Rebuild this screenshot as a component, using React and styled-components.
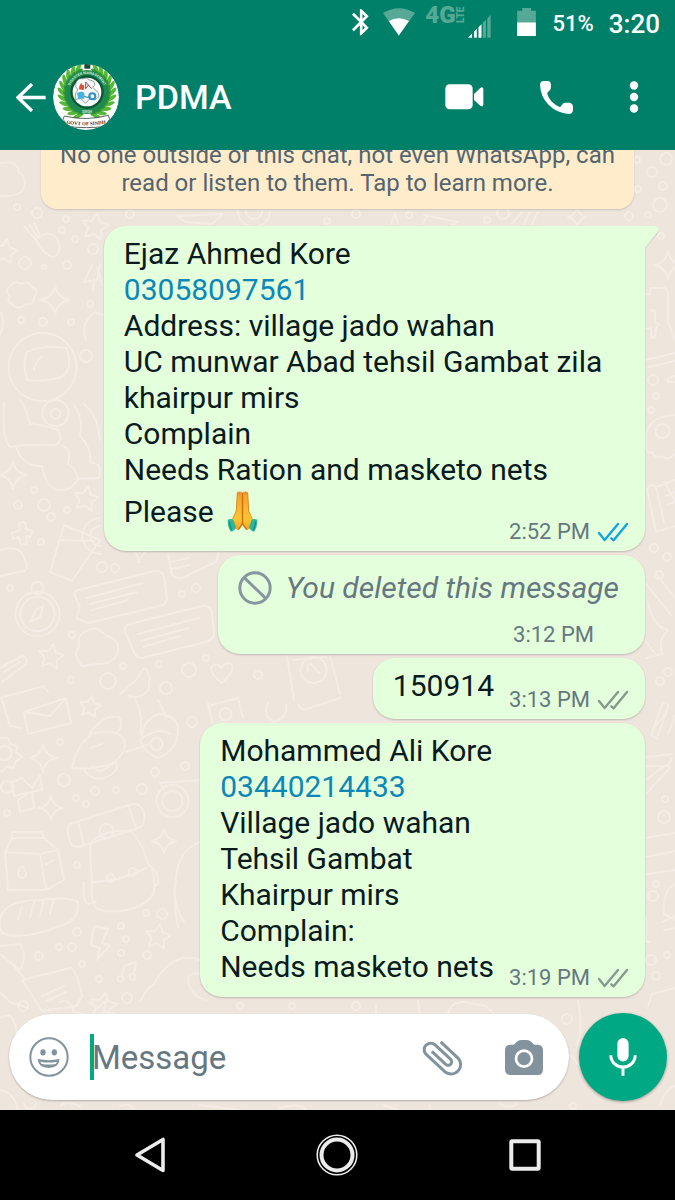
import React from "react";
import styled, { createGlobalStyle, css } from "styled-components";

const MESSAGES = [
  {
    id: "ration",
    tail: true,
    lines: [
      "Ejaz Ahmed Kore",
      { phone: "03058097561" },
      "Address: village jado wahan",
      "UC munwar Abad tehsil Gambat zila khairpur mirs",
      "Complain",
      "Needs Ration and masketo nets",
    ],
    last: "Please",
    emoji: true,
    time: "2:52 PM",
    status: "read",
  },
  { id: "deleted", deleted: true, time: "3:12 PM" },
  { id: "code", lines: [], last: "150914", time: "3:13 PM", status: "delivered" },
  {
    id: "nets",
    lines: [
      "Mohammed Ali Kore",
      { phone: "03440214433" },
      "Village jado wahan",
      "Tehsil Gambat",
      "Khairpur mirs",
      "Complain:",
    ],
    last: "Needs masketo nets",
    time: "3:19 PM",
    status: "delivered",
  },
];

const App = () => {
  const [draft, setDraft] = React.useState("");

  return (
    <Screen>
      <GlobalStyle />
      <Header>
        <StatusBar />
        <AppBar>
          <IconButton aria-label="Back">
            <BackIcon />
          </IconButton>
          <Emblem />
          <Title>PDMA</Title>
          <Actions>
            <IconButton aria-label="Video call">
              <VideoIcon />
            </IconButton>
            <IconButton aria-label="Voice call">
              <PhoneIcon />
            </IconButton>
            <IconButton aria-label="More options">
              <MoreIcon />
            </IconButton>
          </Actions>
        </AppBar>
      </Header>

      <Chat>
        <Wallpaper />
        <Messages>
          <Notice>
            No one outside of this chat, not even WhatsApp, can read or listen
            to them. Tap to learn more.
          </Notice>
          {MESSAGES.map((message) => (
            <Message key={message.id} {...message} />
          ))}
        </Messages>

        <Composer onSubmit={(ev) => ev.preventDefault()}>
          <Field>
            <IconButton type="button" aria-label="Emoji">
              <SmileIcon />
            </IconButton>
            <InputArea>
              {draft === "" && <Caret />}
              <Input
                aria-label="Message"
                placeholder="Message"
                value={draft}
                onChange={(ev) => setDraft(ev.target.value)}
              />
            </InputArea>
            <FieldActions>
              <IconButton type="button" aria-label="Attach">
                <ClipIcon />
              </IconButton>
              <IconButton type="button" aria-label="Camera">
                <CameraIcon />
              </IconButton>
            </FieldActions>
          </Field>
          <MicButton type="button" aria-label="Record voice message">
            <MicIcon />
          </MicButton>
        </Composer>
      </Chat>

      <NavBar>
        <IconButton aria-label="Back">
          <svg width="32" height="38" viewBox="0 0 32 38" fill="none">
            <path
              d="M29 3.5V34.5L3 19Z"
              stroke="#ececec"
              strokeWidth="3.6"
              strokeLinejoin="round"
            />
          </svg>
        </IconButton>
        <IconButton aria-label="Home">
          <svg width="42" height="42" viewBox="0 0 42 42" fill="none">
            <circle cx="21" cy="21" r="19.8" stroke="#ececec" strokeWidth="1.6" />
            <circle cx="21" cy="21" r="15.5" stroke="#ececec" strokeWidth="4" />
          </svg>
        </IconButton>
        <IconButton aria-label="Recent apps">
          <svg width="32" height="32" viewBox="0 0 32 32" fill="none">
            <rect
              x="2.3"
              y="2.3"
              width="27.4"
              height="27.4"
              rx="1"
              stroke="#ececec"
              strokeWidth="4"
            />
          </svg>
        </IconButton>
      </NavBar>
    </Screen>
  );
};

const StatusBar = () => (
  <Status>
    <svg width="21" height="28" viewBox="5 2 16 20" fill="#fff">
      <path d="M17.71 7.71L12 2h-1v7.59L6.41 5 5 6.41 10.59 12 5 17.59 6.41 19 11 14.41V22h1l5.71-5.71-4.3-4.29 4.3-4.29zM13 5.83l1.88 1.88L13 9.59V5.83zm1.88 10.46L13 18.17v-3.76l1.88 1.88z" />
    </svg>
    <svg width="32" height="28" viewBox="0 0 95 82">
      <path d="M0 14Q47 -14 95 14L47 81Z" fill="#56a996" />
      <path d="M17 38Q47 22 77 38L47 81Z" fill="#fff" />
    </svg>
    <Network>
      <Carrier>
        4G<small>LTE</small>
      </Carrier>
      <svg width="23" height="23" viewBox="0 0 68 68">
        <path d="M0 67L12 55V67ZM18 49L26 41V67H18ZM31 36L40 27V67H31Z" fill="#fff" />
        <path d="M44 23L53 14V67H44ZM57 10L67 0V67H57Z" fill="#56a996" />
      </svg>
    </Network>
    <BatteryBox>
      <svg width="19" height="28" viewBox="0 0 55 82">
        <path d="M0 8H15V0H41V8H55V42H0Z" fill="#56a996" />
        <path d="M0 42H55V82H0Z" fill="#fff" />
      </svg>
    </BatteryBox>
    <Percent>51%</Percent>
    <Clock>3:20</Clock>
  </Status>
);

const Message = ({ lines, last, emoji, tail, deleted, time, status }) => {
  if (deleted) {
    return (
      <Bubble $deleted>
        <DeletedRow>
          <BlockIcon />
          <em>You deleted this message</em>
        </DeletedRow>
        <LastRow $end>
          <Meta $noTicks>{time}</Meta>
        </LastRow>
      </Bubble>
    );
  }

  return (
    <Bubble $tail={tail}>
      {tail && (
        <Tail width="14" height="23" viewBox="0 0 14 23">
          <path d="M0 1V23L13 7Q14 0 9 1Z" fill="#000" opacity="0.1" />
          <path d="M0 0V22L12.4 6Q15 0.5 10 0Z" fill="#e4ffdb" />
        </Tail>
      )}
      {lines.map((line) =>
        line.phone ? (
          <div key={line.phone}>
            <PhoneLink href={`tel:${line.phone}`}>{line.phone}</PhoneLink>
          </div>
        ) : (
          <div key={line}>{line}</div>
        )
      )}
      <LastRow>
        <div>
          {last}
          {emoji && (
            <>
              {" "}
              <PrayIcon />
            </>
          )}
        </div>
        <Meta>
          {time}
          <Ticks read={status === "read"} />
        </Meta>
      </LastRow>
    </Bubble>
  );
};

/* Icons */

const BackIcon = () => (
  <svg width="30" height="29" viewBox="0 0 90 87" fill="none">
    <path d="M48 3L6 43.5L48 84M6 43.5H89" stroke="#fff" strokeWidth="10" />
  </svg>
);

const VideoIcon = () => (
  <svg width="39" height="26" viewBox="0 0 117 78" fill="#fff">
    <rect x="1" y="1" width="82" height="75" rx="13" />
    <path d="M87 30L106 12Q114 7 115 15V62Q114 70 106 65L87 48Z" />
  </svg>
);

const PhoneIcon = () => (
  <svg width="33" height="33" viewBox="0 0 97 97" fill="#fff">
    <path d="M10 0H22Q31 0 32 9V20Q32 25 28 28L21 35Q23 48 34 60Q45 71 59 77L67 67Q71 63 77 64H88Q96 66 97 74V86Q96 96 84 97Q50 95 25 70Q1 45 0 10Q1 1 10 0Z" />
  </svg>
);

const MoreIcon = () => (
  <svg width="10" height="32" viewBox="0 0 10 32" fill="#fff">
    <circle cx="5" cy="4.5" r="4.2" />
    <circle cx="5" cy="16" r="4.2" />
    <circle cx="5" cy="27.5" r="4.2" />
  </svg>
);

const BlockIcon = () => (
  <svg width="34" height="34" viewBox="0 0 102 102" fill="none">
    <circle cx="51" cy="51" r="45.5" stroke="#8696a0" strokeWidth="9" />
    <path d="M18 19L84 83" stroke="#8696a0" strokeWidth="9" />
  </svg>
);

const Ticks = ({ read }) => (
  <svg width="30" height="20" viewBox="0 0 90 60" fill="none">
    <path
      d="M3 33L20 54L60 6M40 49L47 55L87 6"
      stroke={read ? "#11a4e0" : "#86988f"}
      strokeWidth="7"
      strokeLinecap="round"
      strokeLinejoin="round"
    />
  </svg>
);

const SmileIcon = () => (
  <svg width="40" height="40" viewBox="0 0 120 120" fill="#82939d">
    <circle cx="60" cy="60" r="56" fill="none" stroke="#82939d" strokeWidth="6" />
    <ellipse cx="42" cy="46" rx="8" ry="9.5" />
    <ellipse cx="76" cy="46" rx="8" ry="9.5" />
    <path d="M26 66Q59 73 92 66Q90 92 59 93Q28 92 26 66Z" />
    <path d="M34 74Q59 79 84 74Q82 79 79 81Q59 84 39 81Q36 79 34 74Z" fill="#fff" />
  </svg>
);

const ClipIcon = () => (
  <svg width="40" height="40" viewBox="2 2 20 20" fill="#82939d">
    <path
      transform="rotate(-47 12.5 12)"
      d="M16.5 6v11.5c0 2.21-1.79 4-4 4s-4-1.79-4-4V5c0-1.38 1.12-2.5 2.5-2.5s2.5 1.12 2.5 2.5v10.5c0 .55-.45 1-1 1s-1-.45-1-1V6H10v9.5c0 1.38 1.12 2.5 2.5 2.5s2.5-1.12 2.5-2.5V5c0-2.21-1.79-4-4-4S7 2.79 7 5v12.5c0 3.04 2.46 5.5 5.5 5.5s5.5-2.46 5.5-5.5V6h-1.5z"
    />
  </svg>
);

const CameraIcon = () => (
  <svg width="38" height="35" viewBox="0 0 112 103" fill="#82939d">
    <path d="M16 14H26L35 5Q40 0 47 0H65Q72 0 77 5L86 14H96Q112 15 112 30V88Q111 102 97 103H15Q1 102 0 88V30Q0 15 16 14Z" />
    <circle cx="56" cy="55" r="23.5" fill="none" stroke="#fff" strokeWidth="8" />
  </svg>
);

const MicIcon = () => (
  <svg width="28" height="38" viewBox="0 0 84 115" fill="none">
    <rect x="25" y="0" width="34" height="71" rx="17" fill="#fff" />
    <path d="M5 52A37 36 0 0 0 79 52M42 88V114" stroke="#fff" strokeWidth="9" />
  </svg>
);

const PrayIcon = () => (
  <Emoji viewBox="0 0 93 123" role="img" aria-label="Folded hands">
    <defs>
      <linearGradient id="skin" x1="0" y1="0" x2="0" y2="1">
        <stop offset="0" stopColor="#f3a02c" />
        <stop offset="0.7" stopColor="#ffc62f" />
        <stop offset="1" stopColor="#f2a01e" />
      </linearGradient>
    </defs>
    <path
      d="M31 4Q37 -1 45 3V100L34 118L24 112L17 88L27 62Z"
      fill="url(#skin)"
    />
    <path
      d="M62 4Q56 -1 48 3V100L59 118L69 112L76 88L66 62Z"
      fill="url(#skin)"
    />
    <path
      d="M46.5 5V96Q44 104 34 116M46.5 96Q49 104 59 116"
      fill="none"
      stroke="#c96a15"
      strokeWidth="4"
    />
    <path
      d="M31 5L28 60L17 84M62 5L65 60L76 84"
      fill="none"
      stroke="#e08a22"
      strokeWidth="3"
    />
    <path d="M31 5Q35 0 41 4V12H31ZM52 4Q58 0 62 5V12H52Z" fill="#e98f3c" />
    <path d="M2 86Q10 82 18 85L27 108Q24 119 12 122Q2 110 2 86Z" fill="#2fb59c" />
    <path d="M91 86Q83 82 75 85L66 108Q69 119 81 122Q91 110 91 86Z" fill="#2fb59c" />
    <path d="M7 92Q8 106 14 116M86 92Q85 106 79 116" fill="none" stroke="#12907e" strokeWidth="4" />
  </Emoji>
);

const LEAVES = [20, 34, 48, 62, 76, 90, 104, 118, 132, 146, 160];

const Emblem = () => (
  <EmblemSvg viewBox="0 0 198 198" role="img" aria-label="PDMA emblem">
    <defs>
      <path id="ring-text" d="M48 84A54 54 0 1 1 156 84" />
      <path id="banner-text" d="M32 178Q100 190 166 177" />
    </defs>
    <circle cx="99" cy="99" r="99" fill="#fff" />
    {LEAVES.map((angle) => (
      <g key={angle}>
        <g transform={`rotate(${180 + angle} 102 84)`}>
          <ellipse cx="102" cy="8" rx="6" ry="17" transform="rotate(48 102 8)" fill="#55b836" />
          <ellipse cx="102" cy="17" rx="4" ry="12" transform="rotate(80 102 17)" fill="#2f9632" />
        </g>
        <g transform={`rotate(${180 - angle} 102 84)`}>
          <ellipse cx="102" cy="8" rx="6" ry="17" transform="rotate(-48 102 8)" fill="#55b836" />
          <ellipse cx="102" cy="17" rx="4" ry="12" transform="rotate(-80 102 17)" fill="#2f9632" />
        </g>
      </g>
    ))}
    <path d="M94 0H112V14H94Z" fill="#1d4a35" />
    <circle cx="102" cy="84" r="66" fill="#1f8a50" />
    <circle cx="102" cy="84" r="50" fill="#0b5636" />
    <circle cx="102" cy="84" r="43" fill="#fff" />
    <text fill="#c9e8d6" fontSize="11" fontFamily="Roboto, sans-serif" fontWeight="700">
      <textPath href="#ring-text" startOffset="50%" textAnchor="middle">
        DISASTER MANAGEMENT
      </textPath>
    </text>
    <path
      d="M72 50Q78 42 90 44L100 42L110 48L122 52L126 62L119 70L136 86L138 98L126 108L110 104L98 118L84 104L66 106L68 88L74 78L66 64Z"
      fill="#f4f7f5"
      stroke="#5f6f79"
      strokeWidth="2"
    />
    <path d="M78 76Q78 62 86 56Q85 66 92 62Q96 70 92 78Z" fill="#e0512e" />
    <path d="M98 54L116 74M98 54V76M107 62L100 72" stroke="#95504e" strokeWidth="3" />
    <path d="M72 88Q82 80 94 86V104H76Z" fill="#45b2dd" />
    <circle cx="118" cy="97" r="9" fill="none" stroke="#2f8fc4" strokeWidth="6" />
    <path d="M94 96Q106 104 112 96" fill="none" stroke="#2f8fc4" strokeWidth="4" />
    <text x="102" y="146" fill="#c9e8d6" fontSize="10" fontWeight="700" fontFamily="Roboto, sans-serif" textAnchor="middle">
      SINDH
    </text>
    <path
      d="M34 156Q100 172 166 154L170 166L164 174V186Q100 196 38 186V176L30 166Z"
      fill="#fff"
      stroke="#3c4543"
      strokeWidth="2.5"
    />
    <text fill="#3b2a30" fontSize="15" fontFamily="Liberation Serif, serif" fontWeight="700">
      <textPath href="#banner-text" startOffset="50%" textAnchor="middle">
        GOVT OF SINDH
      </textPath>
    </text>
  </EmblemSvg>
);

/* Chat wallpaper: faint line doodles */

const DOTS = [
  [17, 207, 3], [37, 213, 5], [66, 219, 3], [62, 230, 3], [75, 239, 3], [93, 249, 5],
  [25, 263, 6], [67, 265, 4], [44, 267, 2], [21, 320, 3], [43, 322, 4], [71, 322, 3],
  [86, 356, 6], [90, 304, 3], [34, 490, 3], [18, 505, 4], [44, 505, 6], [51, 517, 4],
  [67, 510, 3], [41, 542, 3], [102, 567, 5], [115, 568, 4], [10, 588, 3], [182, 594, 3],
  [196, 588, 4], [72, 635, 3], [123, 666, 3], [159, 664, 3], [189, 670, 7], [206, 658, 3],
  [108, 681, 8], [71, 680, 3], [166, 688, 6], [258, 675, 4], [192, 722, 5], [60, 742, 3],
  [155, 772, 4], [185, 766, 4], [64, 780, 6], [95, 791, 4], [116, 790, 3], [142, 789, 5],
  [76, 798, 3], [86, 804, 3], [7, 787, 6], [7, 813, 3], [77, 865, 3], [146, 913, 3],
  [162, 914, 5], [121, 926, 3], [77, 932, 4], [126, 939, 3], [59, 947, 3], [72, 947, 4],
  [39, 956, 4], [147, 955, 4], [121, 953, 3], [82, 964, 3], [99, 979, 3], [127, 998, 5],
  [356, 214, 4], [409, 215, 3], [503, 213, 6], [487, 220, 3], [130, 214, 4], [327, 221, 3],
  [666, 159, 6], [652, 172, 5], [663, 186, 4], [660, 205, 7], [629, 216, 4], [648, 215, 3],
  [638, 189, 3], [637, 160, 3], [661, 236, 3], [653, 380, 5], [656, 396, 3], [651, 410, 3],
  [654, 548, 4], [667, 557, 4], [659, 575, 4], [668, 672, 4], [660, 681, 4], [665, 799, 3],
  [664, 817, 6], [656, 884, 3], [653, 896, 5], [651, 960, 5], [656, 976, 4], [667, 955, 3],
  [23, 1006, 5], [292, 1006, 3], [567, 1019, 5], [356, 1006, 4], [240, 1006, 3], [573, 1106, 3],
];

const DOODLES = [
  // cloud, fork, digits
  "M0 163Q17 160 19 172Q28 178 23 190Q18 197 0 196",
  "M24 226L36 240M29 224L38 238M34 223L40 236M36 240Q44 256 54 257Q62 252 58 240Q50 228 38 238",
  "M92 265L84 282L97 280L100 264M94 279L93 290M98 268L102 285",
  "M10 296Q4 290 10 286Q14 280 21 284Q28 280 32 287Q40 290 34 297Q34 306 26 304Q18 311 12 304Q6 302 10 296Z",
  // astronaut
  "M42 333A34 34 0 1 0 43 333M27 352Q44 345 66 348Q74 368 62 377Q42 382 27 380Q22 364 27 352ZM34 370Q36 360 42 357",
  "M86 340Q80 322 95 312L106 316M0 335Q6 320 0 312",
  "M4 402Q2 440 10 447Q26 444 56 445Q64 440 58 430Q40 424 30 424Q26 408 20 400M16 447Q22 466 42 466Q44 484 56 490Q72 492 78 478Q74 466 68 464Q72 448 62 446",
  "M55 400A13 13 0 1 0 56 400M55 409A5 5 0 1 0 56 409M74 404Q84 420 80 436Q92 448 90 462Q104 464 99 478L78 479M84 404Q98 416 100 440",
  // cup, record, mound
  "M64 525L100 540L72 581L50 572ZM59 540L94 541M100 518A18 18 0 1 0 101 554M100 526A10 10 0 1 0 101 546",
  "M0 550Q20 544 24 558Q30 568 24 571L0 576M12 533L20 530L19 523L25 522L26 529L32 531L30 537L26 536L27 544L21 545L19 537L13 539Z",
  // compass
  "M37 592A22 22 0 1 0 38 592M37 597A17 17 0 1 0 38 597M37 582A6 6 0 1 0 38 582M30 622L36 610L43 606L40 617Z",
  // speech notes
  "M78 590L155 571Q162 570 164 577L167 598Q167 604 160 606L88 623L76 618L80 608L75 596Q74 591 78 590ZM87 598L143 583M90 604L137 592M92 610L128 600",
  "M130 624L202 606Q210 605 212 612L214 634Q213 640 205 642L142 658Q136 658 134 652L125 632Q124 626 130 624ZM138 634L199 618M141 641L188 628M143 647L180 636",
  // hands, book
  "M168 554L172 575Q180 582 190 574L216 562L219 552M170 562L188 558M171 569L190 565M136 553L140 562M145 552L138 562",
  "M84 632Q98 624 106 636Q120 638 118 652Q114 664 98 664L82 666Q72 654 79 646Q77 636 84 632Z",
  "M222 683Q208 672 212 666Q218 662 221 668Q226 660 232 665Q234 672 222 683Z",
  "M0 668L22 656Q28 656 26 664L2 682M4 672L20 662",
  "M287 656L294 700M330 656L340 694M293 660L326 657M313 657A13 13 0 1 0 314 657M308 671Q306 664 311 664L319 673",
  "M120 694L136 680L144 668Q152 672 148 690Q140 700 128 696",
  // envelope
  "M24 712L66 698L71 723L28 734ZM24 712L50 716L66 698M2 700L10 726L22 728M0 698L44 686L48 692",
  // gear
  "M-9 745L-2 738H8L10 744L18 746L16 752L22 757L15 762L14 768L6 767L2 772L-4 768M4 746A7 7 0 1 0 5 746",
  // rocket
  "M72 768Q78 742 94 733Q120 728 125 742Q126 754 112 764Q92 770 72 768ZM90 733Q104 714 119 717Q124 724 118 732M84 769Q90 781 104 778Q120 772 116 762M92 766Q98 775 108 767M90 748L102 744",
  "M126 752L150 744M142 736Q144 718 160 714Q178 716 178 730Q178 750 158 758Q144 752 140 740Q158 726 170 734M156 738A6 6 0 1 0 157 738M136 700Q144 718 140 734M158 700L166 716",
  "M208 703L212 722M208 706L238 698L243 718M225 708A6 6 0 1 0 226 708M268 702Q262 716 274 722Q288 718 286 704M298 704Q300 710 306 709L340 698",
  // butterfly
  "M22 778L32 788L40 775L42 790L32 792L34 808L20 812L18 800L30 792L14 796L12 782Z",
  // skateboard
  "M70 824Q64 830 72 845Q76 848 82 846L138 828Q146 826 144 812Q140 802 132 804ZM78 821L84 845M128 805L136 828M106 824A7 7 0 1 0 107 824",
  // backpack
  "M96 838Q112 828 132 832Q142 842 148 864Q156 870 154 892Q148 906 126 910Q106 914 96 908Q90 900 92 884L90 848Q92 840 96 838ZM92 882Q120 882 146 868M84 882Q82 900 88 904L96 902M150 866Q160 872 158 884L154 886M110 874A4 4 0 1 0 111 874M132 868A4 4 0 1 0 133 868",
  // carton
  "M12 838V832L42 832L44 838M5 852L12 838L44 838L58 850L64 880L46 890L8 890ZM5 852L40 854L58 850M40 854L46 890M22 866Q14 876 22 878Q30 876 22 866ZM46 864L54 860",
  // bread
  "M2 914Q10 900 40 900Q68 896 78 902Q80 920 60 926Q24 940 4 934Q-4 928 2 914ZM18 920L22 906M30 918L34 902M40 916L44 900M50 914L54 899",
  // camera
  "M160 783L200 780M160 783L164 790M172 785A16 16 0 1 0 173 785M172 791A10 10 0 1 0 173 791M200 842Q182 848 177 870Q172 900 178 928M174 890Q176 910 184 922",
  // bolt, note, cat
  "M94 926L108 929L102 943L110 945L97 960L100 948L91 945Z",
  "M124 966L136 962L134 974M124 966L122 976M120 976A3 3 0 1 0 121 976M132 974A3 3 0 1 0 133 974",
  "M22 980L70 968Q76 968 82 996L76 1006L42 1011ZM42 996L64 986M46 1001L66 992M0 946L20 944Q28 956 20 970L0 954M14 966L24 978",
  "M140 1002Q146 988 154 984Q172 950 200 960M188 980Q186 972 202 974M188 980Q190 996 206 1000M0 992L10 1002L28 1008",
  // strip under the encryption notice
  "M177 216L223 214L212 224L186 222ZM238 211A15 15 0 0 0 270 211M246 211A8 8 0 0 0 262 211M391 224L395 213L398 224M424 215L458 222L452 225M422 224L428 215M512 224L522 212M524 224L530 212M532 224L538 212",
  // right edge, top to bottom
  "M645 294H650V288H665Q668 290 668 296V322L675 340M651 311L655 310L655 322L659 324L656 328L655 338L651 337L651 328L646 329",
  "M645 360L675 353M648 367L675 361M675 376Q666 378 668 382L675 382",
  "M646 434Q650 416 675 415M646 436Q644 456 652 452Q656 460 662 456Q668 462 675 454M662 424A7 7 0 1 0 663 424",
  "M647 490L656 532L675 526M647 490Q650 482 656 487L664 522M656 487L675 480M664 482L675 500M666 496L675 492M668 504L675 502",
  "M646 584L672 616M656 574L675 598M648 602Q652 626 668 630Q658 640 662 654L646 658M646 642L656 655",
  "M651 735L663 702Q668 702 668 707L657 739ZM668 734L675 716M654 728L665 714",
  "M646 757L672 754M646 766L668 766L672 758M646 794L670 768M646 780L664 766",
  "M646 838L675 833M646 857L675 851M647 874L675 870M675 884Q662 890 664 914L675 920M662 922L675 916M664 930L675 928",
  "M646 916V942H650M648 1006L652 994L675 988",
  // bottom strip
  "M0 1018Q12 1010 16 1028L18 1050M60 1002Q70 998 74 1012L90 1015M88 1002L98 1008L106 1000L104 1012L114 1014M376 1006V1014M418 1001L420 1014M448 1014Q450 1002 464 1002L486 1006L494 1014M578 1000Q584 1030 576 1046M660 1106Q664 1090 675 1086M560 1052Q572 1052 580 1068",
  "M0 1090Q14 1092 18 1110M24 1103A5 5 0 1 0 36 1103M60 1106Q66 1100 80 1106M120 1106Q130 1102 134 1110M200 1105L240 1110M280 1108Q300 1102 306 1110M384 1105L398 1110M430 1105V1110M500 1104Q510 1110 516 1104",
];

const SPARKLES = [
  [55, 300, 15], [13, 475, 14], [43, 758, 14], [51, 808, 12], [164, 841, 12], [577, 217, 9], [668, 265, 14],
];

const STARS = [
  [95, 227, 14], [5, 252, 13], [86, 499, 13], [51, 657, 13], [90, 707, 11], [158, 937, 13], [103, 1006, 14],
];

const sparklePath = ([x, y, r]) =>
  `M${x} ${y - r}Q${x + 2} ${y - 2} ${x + r} ${y}Q${x + 2} ${y + 2} ${x} ${
    y + r
  }Q${x - 2} ${y + 2} ${x - r} ${y}Q${x - 2} ${y - 2} ${x} ${y - r}Z`;

const starPath = ([x, y, r]) => {
  const points = Array.from({ length: 10 }, (_, i) => {
    const radius = i % 2 ? r / 2 : r;
    const angle = (i * Math.PI) / 5 - 1.4;
    return `${x + radius * Math.cos(angle)} ${y + radius * Math.sin(angle)}`;
  });
  return `M${points.join("L")}Z`;
};

const Wallpaper = () => (
  <WallpaperSvg viewBox="0 150 675 960" preserveAspectRatio="xMinYMin slice" aria-hidden="true">
    {DOTS.map(([x, y, r]) => (
      <circle key={`${x}-${y}`} cx={x} cy={y} r={r} />
    ))}
    {[...DOODLES, ...SPARKLES.map(sparklePath), ...STARS.map(starPath)].map((d) => (
      <path key={d} d={d} />
    ))}
  </WallpaperSvg>
);

const GlobalStyle = createGlobalStyle`
  *, *::before, *::after {
    box-sizing: border-box;
  }
  body {
    margin: 0;
    font-family: Roboto, "Liberation Sans", sans-serif;
    color: #0b1a20;
  }
  svg {
    display: block;
    flex-shrink: 0;
  }
`;

const Screen = styled.div`
  display: flex;
  flex-direction: column;
  height: 100vh;
  overflow: hidden;
`;

const Header = styled.header`
  position: relative;
  z-index: 1;
  background: #008069;
  color: #fff;
`;

const Status = styled.div`
  display: flex;
  align-items: center;
  justify-content: flex-end;
  gap: 10px;
  height: 44px;
  padding-right: 15px;
`;

const Network = styled.div`
  display: flex;
  align-items: flex-end;
  gap: 2px;
  height: 32px;
  padding-right: 7px;
`;

const Carrier = styled.span`
  display: flex;
  align-self: flex-start;
  font-size: 24px;
  line-height: 18px;
  font-weight: 900;
  color: #56a996;

  small {
    writing-mode: vertical-rl;
    transform: rotate(180deg);
    font-size: 10px;
    line-height: 10px;
    text-align: center;
  }
`;

const BatteryBox = styled.div`
  padding: 0 7px 0 9px;
`;

const Percent = styled.span`
  padding: 3px 5px 0 0;
  font-size: 22px;
  font-weight: 500;
`;

const Clock = styled.span`
  padding-top: 3px;
  font-size: 26px;
  font-weight: 500;
`;

const AppBar = styled.div`
  display: flex;
  align-items: center;
  height: 106px;
  padding: 0 36px 0 16px;
`;

const IconButton = styled.button`
  display: grid;
  place-items: center;
  padding: 0;
  border: none;
  background: transparent;
  cursor: pointer;
`;

const EmblemSvg = styled.svg`
  width: 66px;
  height: 66px;
  margin-left: 7px;
  border-radius: 50%;
`;

const Title = styled.h1`
  margin: 0 0 0 16px;
  font-size: 34px;
  font-weight: 500;
`;

const Actions = styled.div`
  display: flex;
  align-items: center;
  gap: 56px;
  margin-left: auto;
`;

const Chat = styled.main`
  position: relative;
  display: flex;
  flex-direction: column;
  flex: 1;
  min-height: 0;
  background: #eee5dd;
`;

const WallpaperSvg = styled.svg`
  position: absolute;
  inset: 0;
  width: 100%;
  height: 100%;
  fill: none;
  stroke: #f4ede6;
  stroke-width: 2;
  stroke-linejoin: round;
  stroke-linecap: round;
`;

const Messages = styled.section`
  position: relative;
  display: flex;
  flex-direction: column;
  justify-content: flex-end;
  align-items: flex-end;
  gap: 4px;
  flex: 1;
  min-height: 0;
  padding: 0 30px 16px;
`;

const Notice = styled.p`
  align-self: stretch;
  margin: 0 11px 13px;
  padding: 12px 14px;
  border-radius: 16px;
  background: #ffeccb;
  box-shadow: 0 1px 2px rgba(0, 0, 0, 0.15);
  color: #54656f;
  font-size: 24px;
  line-height: 28px;
  text-align: center;
`;

const Bubble = styled.article`
  position: relative;
  display: flex;
  flex-direction: column;
  flex-shrink: 0;
  max-width: 88%;
  min-height: 61px;
  padding: 10px 17px 12px 20px;
  border-radius: 22px;
  background: #e4ffdb;
  box-shadow: 0 1px 2px rgba(0, 0, 0, 0.2);
  font-size: 30px;
  line-height: 36px;

  ${({ $tail }) =>
    $tail &&
    css`
      border-top-right-radius: 0;
    `}

  ${({ $deleted }) =>
    $deleted &&
    css`
      min-height: 99px;
    `}
`;

const Tail = styled.svg`
  position: absolute;
  top: 0;
  left: 100%;
`;

const PhoneLink = styled.a`
  color: #0c87b8;
  text-decoration: none;
`;

const LastRow = styled.div`
  display: flex;
  justify-content: ${({ $end }) => ($end ? "flex-end" : "space-between")};
  gap: 15px;
  flex: 1;
`;

const DeletedRow = styled.div`
  display: flex;
  align-items: center;
  gap: 14px;
  padding: 5px 9px 0 0;
  color: #667781;
`;

const Meta = styled.span`
  display: flex;
  align-items: center;
  align-self: flex-end;
  gap: 8px;
  margin-bottom: -6px;
  padding-right: ${({ $noTicks }) => ($noTicks ? "34px" : "0")};
  color: #667781;
  font-size: 22px;
  line-height: 26px;
  white-space: nowrap;
`;

const Emoji = styled.svg`
  display: inline-block;
  width: 31px;
  height: 41px;
  margin: 3px 0 7px 6px;
  vertical-align: -17px;
`;

const Composer = styled.form`
  position: relative;
  display: flex;
  align-items: center;
  gap: 10px;
  padding: 0 8px 9px 9px;
`;

const Field = styled.div`
  display: flex;
  align-items: center;
  flex: 1;
  min-width: 0;
  height: 86px;
  padding: 0 26px 0 20px;
  border-radius: 43px;
  background: #fff;
  box-shadow: 0 1px 2px rgba(0, 0, 0, 0.25);
`;

const InputArea = styled.div`
  display: flex;
  align-items: center;
  flex: 1;
  min-width: 0;
  margin-left: 21px;
`;

const Caret = styled.span`
  flex-shrink: 0;
  width: 4px;
  height: 46px;
  margin-right: -2px;
  background: #00a884;
`;

const Input = styled.input`
  flex: 1;
  min-width: 0;
  padding: 0;
  border: none;
  outline: none;
  background: transparent;
  color: inherit;
  font: inherit;
  font-size: 33px;

  &::placeholder {
    color: #667781;
    opacity: 1;
  }
`;

const FieldActions = styled.div`
  display: flex;
  align-items: center;
  gap: 43px;
`;

const MicButton = styled(IconButton)`
  width: 88px;
  height: 88px;
  border-radius: 50%;
  background: #00a884;
  box-shadow: 0 1px 3px rgba(0, 0, 0, 0.35);
`;

const NavBar = styled.nav`
  display: grid;
  grid-template-columns: repeat(3, 1fr);
  place-items: center;
  height: 90px;
  padding: 0 56px;
  background: #000;
`;

export default App;
